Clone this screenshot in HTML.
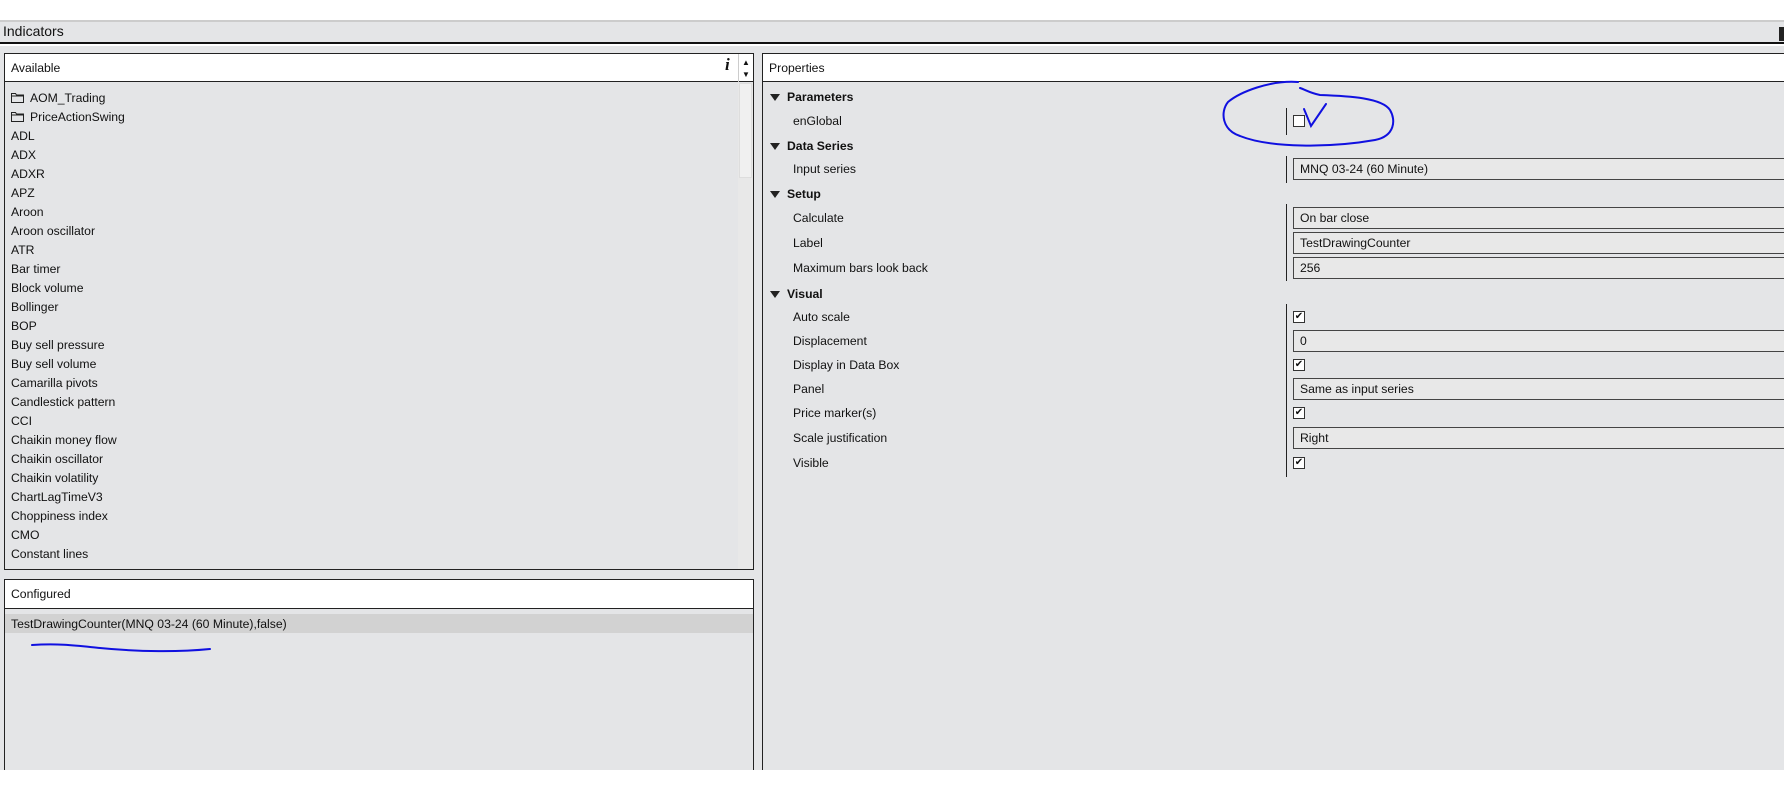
<!DOCTYPE html>
<html><head><meta charset="utf-8"><style>
*{margin:0;padding:0;box-sizing:border-box}
body{width:1784px;height:792px;background:#fff;position:relative;overflow:hidden;font-family:"Liberation Sans",sans-serif;font-size:12.2px;color:#111}
.a{position:absolute}
.t{position:absolute;white-space:nowrap;line-height:15px}
.box{position:absolute;border:1px solid #222;background:#e4e5e7}
.hdr{position:absolute;left:0;right:0;top:0;height:28px;background:#fff;border-bottom:1px solid #222}
.cb{position:absolute;width:12px;height:12px;border:1px solid #333;background:#fff;font-size:10px;line-height:10px;text-align:center}
.vb{position:absolute;left:1293px;width:500px;height:22px;border:1px solid #444;background:#e8e8e8;padding-left:6px;line-height:20px}
.sec{font-weight:bold}
.tri{position:absolute;width:0;height:0;border-left:5px solid transparent;border-right:5px solid transparent;border-top:7px solid #222}
</style></head><body>
<div class="a" style="left:0;top:20px;width:1784px;height:24px;background:#e4e5e7;border-top:2px solid #ccc;border-bottom:2px solid #111"></div>
<div class="t" style="left:3px;top:24px;font-size:14px">Indicators</div>
<div class="a" style="left:1779px;top:27px;width:5px;height:14px;background:#222"></div>
<div class="a" style="left:0;top:46px;width:1784px;height:724px;background:#e4e5e7"></div>

<div class="box" style="left:4px;top:53px;width:750px;height:517px">
 <div class="hdr"></div>
 <div class="t" style="left:6px;top:7px">Available</div>
 <div class="t" style="left:720px;top:3px;font-family:'Liberation Serif',serif;font-style:italic;font-weight:bold;font-size:17px">i</div>
 <div class="a" style="left:733px;top:0;width:1px;height:28px;background:#ccc"></div>
 <div class="t" style="left:737px;top:1px;font-size:8px">▲</div>
 <div class="t" style="left:737px;top:13px;font-size:8px">▼</div>
 <div class="a" style="left:733px;top:29px;width:15px;height:486px;background:#e8e8e8"></div>
 <div class="a" style="left:734px;top:29px;width:13px;height:95px;background:#f0f0f0;border:1px solid #ddd"></div>
</div>
<div class="t" style="left:11px;top:89px;line-height:19px">
<div><svg width="13" height="11" style="vertical-align:-1px;margin-right:6px"><path d="M0.5 1.5h4l1 1.5h7v7.5h-12z M0.5 4h12" fill="none" stroke="#222"/></svg>AOM_Trading</div>
<div><svg width="13" height="11" style="vertical-align:-1px;margin-right:6px"><path d="M0.5 1.5h4l1 1.5h7v7.5h-12z M0.5 4h12" fill="none" stroke="#222"/></svg>PriceActionSwing</div>
<div>ADL</div><div>ADX</div><div>ADXR</div><div>APZ</div><div>Aroon</div><div>Aroon oscillator</div><div>ATR</div><div>Bar timer</div><div>Block volume</div><div>Bollinger</div><div>BOP</div><div>Buy sell pressure</div><div>Buy sell volume</div><div>Camarilla pivots</div><div>Candlestick pattern</div><div>CCI</div><div>Chaikin money flow</div><div>Chaikin oscillator</div><div>Chaikin volatility</div><div>ChartLagTimeV3</div><div>Choppiness index</div><div>CMO</div><div>Constant lines</div>
</div>

<div class="box" style="left:4px;top:579px;width:750px;height:200px">
 <div class="hdr" style="height:29px"></div>
 <div class="t" style="left:6px;top:7px">Configured</div>
 <div class="a" style="left:0;right:0;top:34px;height:19px;background:#d2d2d2"></div>
 <div class="t" style="left:6px;top:37px">TestDrawingCounter(MNQ 03-24 (60 Minute),false)</div>
</div>

<div class="box" style="left:762px;top:53px;width:1030px;height:726px">
 <div class="hdr"></div>
 <div class="t" style="left:6px;top:7px">Properties</div>
</div>
<div class="a" style="left:0;top:770px;width:1784px;height:22px;background:#fff"></div>

<div class="tri" style="left:770px;top:94px"></div><div class="t sec" style="left:787px;top:90px">Parameters</div>
<div class="t" style="left:793px;top:114px">enGlobal</div>
<div class="tri" style="left:770px;top:143px"></div><div class="t sec" style="left:787px;top:139px">Data Series</div>
<div class="t" style="left:793px;top:162px">Input series</div>
<div class="tri" style="left:770px;top:191px"></div><div class="t sec" style="left:787px;top:187px">Setup</div>
<div class="t" style="left:793px;top:211px">Calculate</div>
<div class="t" style="left:793px;top:236px">Label</div>
<div class="t" style="left:793px;top:261px">Maximum bars look back</div>
<div class="tri" style="left:770px;top:291px"></div><div class="t sec" style="left:787px;top:287px">Visual</div>
<div class="t" style="left:793px;top:310px">Auto scale</div>
<div class="t" style="left:793px;top:334px">Displacement</div>
<div class="t" style="left:793px;top:358px">Display in Data Box</div>
<div class="t" style="left:793px;top:382px">Panel</div>
<div class="t" style="left:793px;top:406px">Price marker(s)</div>
<div class="t" style="left:793px;top:431px">Scale justification</div>
<div class="t" style="left:793px;top:456px">Visible</div>

<div class="a" style="left:1286px;top:108px;width:1px;height:27px;background:#222"></div>
<div class="a" style="left:1286px;top:156px;width:1px;height:27px;background:#222"></div>
<div class="a" style="left:1286px;top:204px;width:1px;height:77px;background:#222"></div>
<div class="a" style="left:1286px;top:304px;width:1px;height:173px;background:#222"></div>

<div class="cb" style="left:1293px;top:115px"></div>
<div class="vb" style="top:158px">MNQ 03-24 (60 Minute)</div>
<div class="vb" style="top:207px">On bar close</div>
<div class="vb" style="top:232px">TestDrawingCounter</div>
<div class="vb" style="top:257px">256</div>
<div class="cb" style="left:1293px;top:311px">✔</div>
<div class="vb" style="top:330px">0</div>
<div class="cb" style="left:1293px;top:359px">✔</div>
<div class="vb" style="top:378px">Same as input series</div>
<div class="cb" style="left:1293px;top:407px">✔</div>
<div class="vb" style="top:427px">Right</div>
<div class="cb" style="left:1293px;top:457px">✔</div>

<svg class="a" style="left:0;top:0" width="1784" height="792">
<g fill="none" stroke="#1010e0" stroke-width="2" stroke-linecap="round">
<path d="M1298 82 C1270 80 1240 92 1228 102 C1220 112 1222 130 1240 136 C1270 148 1330 148 1375 140 C1395 136 1396 120 1390 110 C1382 98 1350 96 1320 95 C1310 93 1306 90 1300 88"/>
<path d="M1304 109 L1311 126 L1326 104"/>
<path d="M32 645 C60 643 80 646 100 648 C140 652 180 652 210 649"/>
</g></svg>
</body></html>
